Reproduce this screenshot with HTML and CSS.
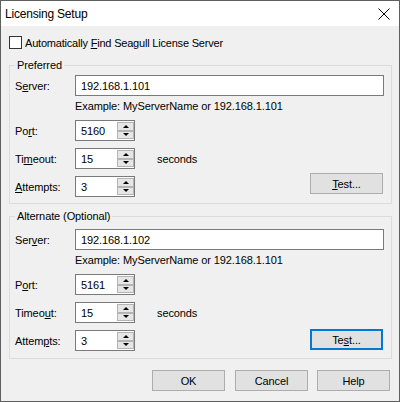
FILE: index.html
```html
<!DOCTYPE html>
<html>
<head>
<meta charset="utf-8">
<title>Licensing Setup</title>
<link rel="stylesheet" href="styles.css">
</head>
<body>
<div class="window">
  <div class="titlebar">
    <span class="title">Licensing Setup</span>
    <svg class="close" width="12" height="12" viewBox="0 0 12 12"><path d="M0.5 0.5 L11.5 11.5 M11.5 0.5 L0.5 11.5" stroke="#000" stroke-width="1" fill="none"/></svg>
  </div>
  <div class="content">
    <div class="check"><span class="box"></span><span class="checktext">Automatically <u>F</u>ind Seagull License Server</span></div>

    <fieldset class="group g1">
      <legend>Preferred</legend>
      <div class="row"><span class="lbl">S<u>e</u>rver:</span><div class="field">192.168.1.101</div></div>
      <div class="example">Example: MyServerName or 192.168.1.101</div>
      <div class="row"><span class="lbl">Po<u>r</u>t:</span><div class="spin"><span class="val">5160</span><span class="arrows"><span class="up"></span><span class="dn"></span></span></div></div>
      <div class="row"><span class="lbl">Ti<u>m</u>eout:</span><div class="spin"><span class="val">15</span><span class="arrows"><span class="up"></span><span class="dn"></span></span></div><span class="unit">seconds</span></div>
      <div class="row"><span class="lbl"><u>A</u>ttempts:</span><div class="spin"><span class="val">3</span><span class="arrows"><span class="up"></span><span class="dn"></span></span></div><div class="btn test"><span><u>T</u>est...</span></div></div>
    </fieldset>

    <fieldset class="group g2">
      <legend>Alternate (Optional)</legend>
      <div class="row"><span class="lbl">Ser<u>v</u>er:</span><div class="field">192.168.1.102</div></div>
      <div class="example">Example: MyServerName or 192.168.1.101</div>
      <div class="row"><span class="lbl">P<u>o</u>rt:</span><div class="spin"><span class="val">5161</span><span class="arrows"><span class="up"></span><span class="dn"></span></span></div></div>
      <div class="row"><span class="lbl">Timeo<u>u</u>t:</span><div class="spin"><span class="val">15</span><span class="arrows"><span class="up"></span><span class="dn"></span></span></div><span class="unit">seconds</span></div>
      <div class="row"><span class="lbl">Attem<u>p</u>ts:</span><div class="spin"><span class="val">3</span><span class="arrows"><span class="up"></span><span class="dn"></span></span></div><div class="btn test focus"><span>Te<u>s</u>t...</span></div></div>
    </fieldset>

    <div class="buttons">
      <div class="btn ok">OK</div>
      <div class="btn cancel">Cancel</div>
      <div class="btn help">Help</div>
    </div>
  </div>
</div>
</body>
</html>
```

FILE: styles.css
```css
* { box-sizing: border-box; }
html, body { margin: 0; padding: 0; }
body {
  font-family: "Liberation Sans", Arial, sans-serif;
  font-size: 11px;
  letter-spacing: -0.1px;
  color: #000;
  background: #fff;
}
.window {
  width: 400px;
  height: 402px;
  border: 1px solid #5f5f5f;
  background: #f0f0f0;
  display: flex;
  flex-direction: column;
}
.titlebar {
  height: 25px;
  flex: 0 0 25px;
  background: #fff;
  display: flex;
  align-items: center;
  justify-content: space-between;
  padding: 0 9px 0 4px;
  font-size: 12px;
  letter-spacing: -0.2px;
}
.close { display: block; }
.content {
  padding: 10px 7px 0 8px;
  display: flex;
  flex-direction: column;
}
.check {
  display: flex;
  align-items: center;
  height: 13px;
  gap: 3px;
}
.checktext { letter-spacing: -0.2px; }
.box {
  width: 13px;
  height: 13px;
  border: 1px solid #333;
  background: #fff;
}
fieldset.group {
  margin: 9px 0 0 0;
  border: 1px solid #dcdcdc;
  padding: 2px 7px 6px 5px;
  min-width: 0;
}
fieldset.g2 {
  margin-top: 5px;
  padding: 5px 7px 7px 5px;
}
legend {
  padding: 0 2px;
  line-height: 15px;
  height: 15px;
}
.row {
  display: flex;
  align-items: center;
  height: 21px;
}
.row + .row { margin-top: 7px; }
.lbl { width: 60px; flex: 0 0 60px; }
.field {
  flex: 1;
  height: 21px;
  border: 1px solid #7a7a7a;
  background: #fff;
  padding-left: 5px;
  display: flex;
  align-items: center;
}
.example {
  margin: 3px 0 6px 60px;
  line-height: 15px;
}
.spin {
  width: 60px;
  height: 21px;
  border: 1px solid #7a7a7a;
  background: #fff;
  display: flex;
}
.val {
  flex: 1;
  padding-left: 5px;
  display: flex;
  align-items: center;
}
.arrows {
  width: 17px;
  display: flex;
  flex-direction: column;
  padding: 1px 0;
}
.arrows span {
  flex: 1;
  background: #e6e6e6;
  border: 1px solid #b4b4b4;
  display: flex;
  align-items: center;
  justify-content: center;
}
.arrows span::before {
  content: "";
  width: 0;
  height: 0;
  border-left: 3px solid transparent;
  border-right: 3px solid transparent;
}
.arrows .up::before { border-bottom: 3px solid #000; }
.arrows .dn::before { border-top: 3px solid #000; }
.unit { margin-left: 22px; }
.btn {
  width: 73px;
  height: 21px;
  background: #e1e1e1;
  border: 1px solid #adadad;
  display: flex;
  align-items: center;
  justify-content: center;
}
.test {
  margin-left: auto;
  margin-right: 1px;
  align-self: flex-start;
  margin-top: -3px;
}
.g2 .test { margin-top: -1px; }
.focus { border: 2px solid #0078d7; }
.buttons {
  display: flex;
  justify-content: flex-end;
  margin: 11px 2px 0 0;
}
.ok { margin-right: 10px; }
.cancel { margin-right: 9px; }
```
